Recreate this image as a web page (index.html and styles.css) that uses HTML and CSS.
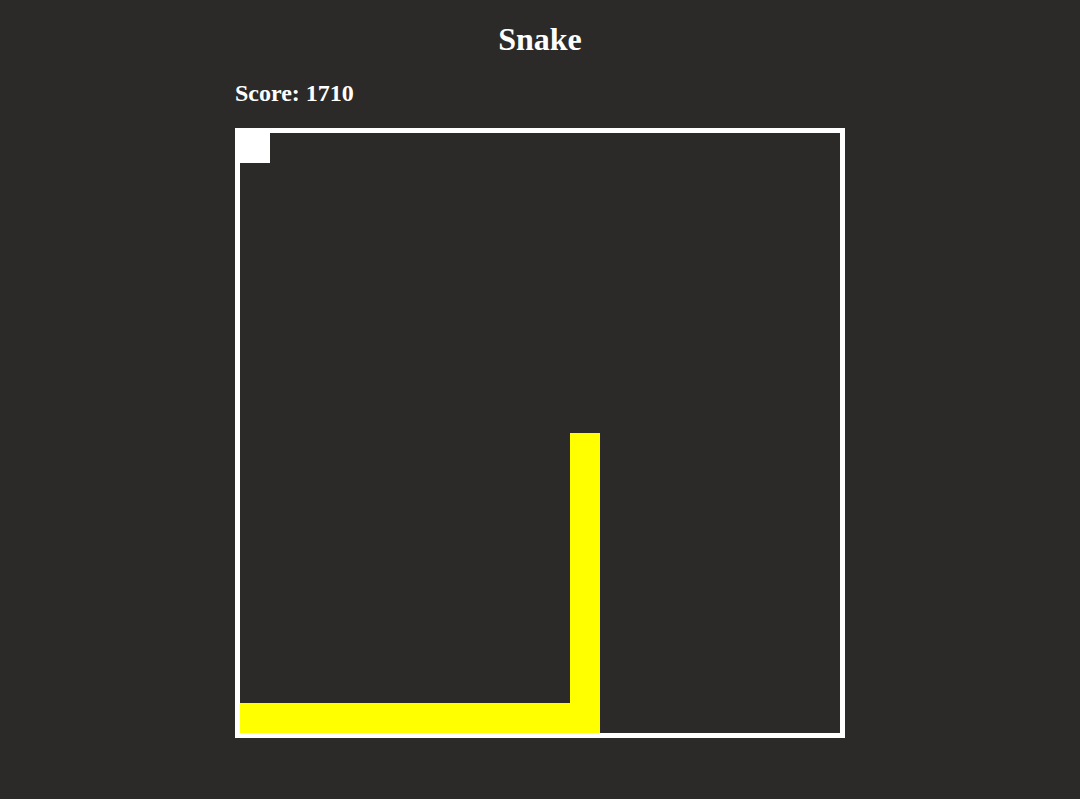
FILE: index.html
```html
<!DOCTYPE html>
<html>
<head>
<meta charset="utf-8">
<title>Snake</title>
<link rel="stylesheet" href="styles.css">
</head>
<body>
<main class="game">
  <h1 class="title">Snake</h1>
  <h2 class="score">Score: 1710</h2>
  <div class="board">
    <div class="food"></div>
    <div class="snake snake-vertical"></div>
    <div class="snake snake-horizontal"></div>
  </div>
</main>
</body>
</html>
```
FILE: styles.css
```css
html, body {
  margin: 0;
  padding: 0;
  background: #2b2a29;
}
body {
  font-family: "Liberation Serif", "Times New Roman", serif;
  color: #ffffff;
}
.game {
  width: 610px;
  margin: 0 auto;
  padding-top: 21px;
}
.title {
  margin: 0;
  font-size: 32px;
  line-height: 37px;
  font-weight: bold;
  text-align: center;
}
.score {
  margin: 21px 0 0;
  font-size: 24px;
  line-height: 28px;
  font-weight: bold;
}
.board {
  margin-top: 21px;
  width: 600px;
  height: 600px;
  border: 5px solid #ffffff;
  display: grid;
  grid-template-columns: repeat(20, 30px);
  grid-template-rows: repeat(20, 30px);
}
.food {
  grid-column: 1;
  grid-row: 1;
  background: #ffffff;
}
.snake {
  background: #ffff00;
}
.snake-vertical {
  grid-column: 12;
  grid-row: 11 / 20;
}
.snake-horizontal {
  grid-column: 1 / 13;
  grid-row: 20;
}
```
